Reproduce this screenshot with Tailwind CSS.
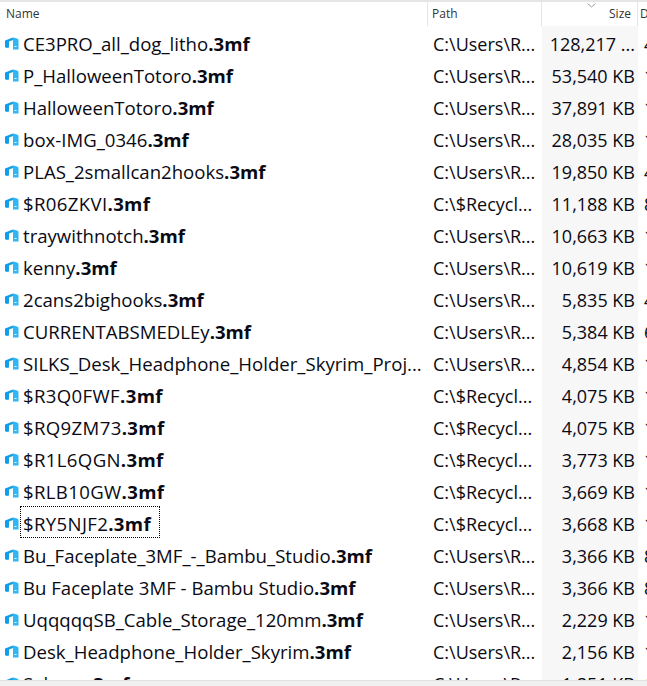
<!DOCTYPE html>
<html>
<head>
    <meta charset="UTF-8">
    <title>Search results</title>
    <script src="https://cdn.jsdelivr.net/npm/@tailwindcss/browser@4"></script>
</head>
<body class="bg-white overflow-hidden h-[686px] relative font-['Open_Sans','Noto_Sans',sans-serif] text-[18px] text-[#0a0a14]">
    <svg class="hidden">
        <symbol id="icon3mf" viewBox="0 0 15 14">
            <path fill="#0f9fe6" d="M0 3.5 L8 0.5 L8 3 L4 4.5 L4 10.5 L1.5 11 L0 10 Z"/>
            <path fill="#2fb6f3" d="M8 0.5 L11.5 1.2 L13.5 2.5 L13.5 12.5 L8 12.5 Z"/>
            <path fill="#ffffff" d="M9.5 9 h2 v1 h-2 z"/>
        </symbol>
    </svg>

    <div class="h-[2px] bg-[#e5e5e5]"></div>
    <!-- column headers -->
    <div class="flex h-[24px] text-[12px] leading-[24px] text-[#333]">
        <div class="w-[428px] shrink-0 pl-[6px] border-r border-[#e5e5e5]">Name</div>
        <div class="w-[114px] shrink-0 pl-[4px] border-r border-[#e5e5e5]">Path</div>
        <div class="w-[96px] shrink-0 pr-[6px] text-right border-r border-[#e5e5e5] relative">
            <svg class="absolute right-[41px] top-[1px]" width="9" height="5" viewBox="0 0 9 5"><path d="M0.5 0.5 L4.5 4 L8.5 0.5" fill="none" stroke="#999" /></svg>
            Size
        </div>
        <div class="pl-[2px]">D</div>
    </div>

    <div class="absolute left-[542px] top-[26px] w-[96px] h-[660px] bg-[#f7f7f7]"></div>

    <div class="relative">
        <div class="flex h-[32px] leading-[32px] whitespace-nowrap mt-[2px]"><div class="w-[428px] shrink-0 flex items-center pl-[5px] overflow-hidden text-[18.6px]"><svg class="w-[15px] h-[14px] mr-[3px] shrink-0"><use href="#icon3mf"/></svg><span>CE3PRO_all_dog_litho<b>.3mf</b></span></div><div class="w-[114px] shrink-0 pl-[5px]">C:\Users\R...</div><div class="w-[96px] shrink-0 pr-[3px] text-right">128,217 ...</div><div class="shrink-0 pl-[6px]">4</div></div>
        <div class="flex h-[32px] leading-[32px] whitespace-nowrap"><div class="w-[428px] shrink-0 flex items-center pl-[5px] overflow-hidden text-[18.6px]"><svg class="w-[15px] h-[14px] mr-[3px] shrink-0"><use href="#icon3mf"/></svg><span>P_HalloweenTotoro<b>.3mf</b></span></div><div class="w-[114px] shrink-0 pl-[5px]">C:\Users\R...</div><div class="w-[96px] shrink-0 pr-[3px] text-right">53,540 KB</div><div class="shrink-0 pl-[6px]">1</div></div>
        <div class="flex h-[32px] leading-[32px] whitespace-nowrap"><div class="w-[428px] shrink-0 flex items-center pl-[5px] overflow-hidden text-[18.6px]"><svg class="w-[15px] h-[14px] mr-[3px] shrink-0"><use href="#icon3mf"/></svg><span>HalloweenTotoro<b>.3mf</b></span></div><div class="w-[114px] shrink-0 pl-[5px]">C:\Users\R...</div><div class="w-[96px] shrink-0 pr-[3px] text-right">37,891 KB</div><div class="shrink-0 pl-[6px]">1</div></div>
        <div class="flex h-[32px] leading-[32px] whitespace-nowrap"><div class="w-[428px] shrink-0 flex items-center pl-[5px] overflow-hidden text-[18.6px]"><svg class="w-[15px] h-[14px] mr-[3px] shrink-0"><use href="#icon3mf"/></svg><span>box-IMG_0346<b>.3mf</b></span></div><div class="w-[114px] shrink-0 pl-[5px]">C:\Users\R...</div><div class="w-[96px] shrink-0 pr-[3px] text-right">28,035 KB</div><div class="shrink-0 pl-[6px]">1</div></div>
        <div class="flex h-[32px] leading-[32px] whitespace-nowrap"><div class="w-[428px] shrink-0 flex items-center pl-[5px] overflow-hidden text-[18.6px]"><svg class="w-[15px] h-[14px] mr-[3px] shrink-0"><use href="#icon3mf"/></svg><span>PLAS_2smallcan2hooks<b>.3mf</b></span></div><div class="w-[114px] shrink-0 pl-[5px]">C:\Users\R...</div><div class="w-[96px] shrink-0 pr-[3px] text-right">19,850 KB</div><div class="shrink-0 pl-[6px]">4</div></div>
        <div class="flex h-[32px] leading-[32px] whitespace-nowrap"><div class="w-[428px] shrink-0 flex items-center pl-[5px] overflow-hidden text-[18.6px]"><svg class="w-[15px] h-[14px] mr-[3px] shrink-0"><use href="#icon3mf"/></svg><span class="tracking-[0.35px]">$R06ZKVI<b>.3mf</b></span></div><div class="w-[114px] shrink-0 pl-[5px]">C:\$Recycl...</div><div class="w-[96px] shrink-0 pr-[3px] text-right">11,188 KB</div><div class="shrink-0 pl-[6px]">8</div></div>
        <div class="flex h-[32px] leading-[32px] whitespace-nowrap"><div class="w-[428px] shrink-0 flex items-center pl-[5px] overflow-hidden text-[18.6px]"><svg class="w-[15px] h-[14px] mr-[3px] shrink-0"><use href="#icon3mf"/></svg><span>traywithnotch<b>.3mf</b></span></div><div class="w-[114px] shrink-0 pl-[5px]">C:\Users\R...</div><div class="w-[96px] shrink-0 pr-[3px] text-right">10,663 KB</div><div class="shrink-0 pl-[6px]">1</div></div>
        <div class="flex h-[32px] leading-[32px] whitespace-nowrap"><div class="w-[428px] shrink-0 flex items-center pl-[5px] overflow-hidden text-[18.6px]"><svg class="w-[15px] h-[14px] mr-[3px] shrink-0"><use href="#icon3mf"/></svg><span>kenny<b>.3mf</b></span></div><div class="w-[114px] shrink-0 pl-[5px]">C:\Users\R...</div><div class="w-[96px] shrink-0 pr-[3px] text-right">10,619 KB</div><div class="shrink-0 pl-[6px]">1</div></div>
        <div class="flex h-[32px] leading-[32px] whitespace-nowrap"><div class="w-[428px] shrink-0 flex items-center pl-[5px] overflow-hidden text-[18.6px]"><svg class="w-[15px] h-[14px] mr-[3px] shrink-0"><use href="#icon3mf"/></svg><span>2cans2bighooks<b>.3mf</b></span></div><div class="w-[114px] shrink-0 pl-[5px]">C:\Users\R...</div><div class="w-[96px] shrink-0 pr-[3px] text-right">5,835 KB</div><div class="shrink-0 pl-[6px]">4</div></div>
        <div class="flex h-[32px] leading-[32px] whitespace-nowrap"><div class="w-[428px] shrink-0 flex items-center pl-[5px] overflow-hidden text-[18.6px]"><svg class="w-[15px] h-[14px] mr-[3px] shrink-0"><use href="#icon3mf"/></svg><span>CURRENTABSMEDLEy<b>.3mf</b></span></div><div class="w-[114px] shrink-0 pl-[5px]">C:\Users\R...</div><div class="w-[96px] shrink-0 pr-[3px] text-right">5,384 KB</div><div class="shrink-0 pl-[6px]">6</div></div>
        <div class="flex h-[32px] leading-[32px] whitespace-nowrap"><div class="w-[428px] shrink-0 flex items-center pl-[5px] overflow-hidden text-[18.6px]"><svg class="w-[15px] h-[14px] mr-[3px] shrink-0"><use href="#icon3mf"/></svg><span>SILKS_Desk_Headphone_Holder_Skyrim_Proj...</span></div><div class="w-[114px] shrink-0 pl-[5px]">C:\Users\R...</div><div class="w-[96px] shrink-0 pr-[3px] text-right">4,854 KB</div><div class="shrink-0 pl-[6px]">1</div></div>
        <div class="flex h-[32px] leading-[32px] whitespace-nowrap"><div class="w-[428px] shrink-0 flex items-center pl-[5px] overflow-hidden text-[18.6px]"><svg class="w-[15px] h-[14px] mr-[3px] shrink-0"><use href="#icon3mf"/></svg><span class="tracking-[0.35px]">$R3Q0FWF<b>.3mf</b></span></div><div class="w-[114px] shrink-0 pl-[5px]">C:\$Recycl...</div><div class="w-[96px] shrink-0 pr-[3px] text-right">4,075 KB</div><div class="shrink-0 pl-[6px]">1</div></div>
        <div class="flex h-[32px] leading-[32px] whitespace-nowrap"><div class="w-[428px] shrink-0 flex items-center pl-[5px] overflow-hidden text-[18.6px]"><svg class="w-[15px] h-[14px] mr-[3px] shrink-0"><use href="#icon3mf"/></svg><span class="tracking-[0.35px]">$RQ9ZM73<b>.3mf</b></span></div><div class="w-[114px] shrink-0 pl-[5px]">C:\$Recycl...</div><div class="w-[96px] shrink-0 pr-[3px] text-right">4,075 KB</div><div class="shrink-0 pl-[6px]">1</div></div>
        <div class="flex h-[32px] leading-[32px] whitespace-nowrap"><div class="w-[428px] shrink-0 flex items-center pl-[5px] overflow-hidden text-[18.6px]"><svg class="w-[15px] h-[14px] mr-[3px] shrink-0"><use href="#icon3mf"/></svg><span class="tracking-[0.35px]">$R1L6QGN<b>.3mf</b></span></div><div class="w-[114px] shrink-0 pl-[5px]">C:\$Recycl...</div><div class="w-[96px] shrink-0 pr-[3px] text-right">3,773 KB</div><div class="shrink-0 pl-[6px]">1</div></div>
        <div class="flex h-[32px] leading-[32px] whitespace-nowrap"><div class="w-[428px] shrink-0 flex items-center pl-[5px] overflow-hidden text-[18.6px]"><svg class="w-[15px] h-[14px] mr-[3px] shrink-0"><use href="#icon3mf"/></svg><span class="tracking-[0.35px]">$RLB10GW<b>.3mf</b></span></div><div class="w-[114px] shrink-0 pl-[5px]">C:\$Recycl...</div><div class="w-[96px] shrink-0 pr-[3px] text-right">3,669 KB</div><div class="shrink-0 pl-[6px]">1</div></div>
        <div class="flex h-[32px] leading-[32px] whitespace-nowrap"><div class="w-[428px] shrink-0 flex items-center pl-[5px] text-[18.6px]"><svg class="w-[15px] h-[14px] mr-[3px] shrink-0"><use href="#icon3mf"/></svg><span class="tracking-[0.35px] border border-dotted border-black h-[32px] mb-[4px] pt-[1px] leading-[31px] pr-[8px] pl-[2px] -ml-[3px]">$RY5NJF2<b>.3mf</b></span></div><div class="w-[114px] shrink-0 pl-[5px]">C:\$Recycl...</div><div class="w-[96px] shrink-0 pr-[3px] text-right">3,668 KB</div><div class="shrink-0 pl-[6px]">1</div></div>
        <div class="flex h-[32px] leading-[32px] whitespace-nowrap"><div class="w-[428px] shrink-0 flex items-center pl-[5px] overflow-hidden text-[18.6px]"><svg class="w-[15px] h-[14px] mr-[3px] shrink-0"><use href="#icon3mf"/></svg><span>Bu_Faceplate_3MF_-_Bambu_Studio<b>.3mf</b></span></div><div class="w-[114px] shrink-0 pl-[5px]">C:\Users\R...</div><div class="w-[96px] shrink-0 pr-[3px] text-right">3,366 KB</div><div class="shrink-0 pl-[6px]">8</div></div>
        <div class="flex h-[32px] leading-[32px] whitespace-nowrap"><div class="w-[428px] shrink-0 flex items-center pl-[5px] overflow-hidden text-[18.6px]"><svg class="w-[15px] h-[14px] mr-[3px] shrink-0"><use href="#icon3mf"/></svg><span>Bu Faceplate 3MF - Bambu Studio<b>.3mf</b></span></div><div class="w-[114px] shrink-0 pl-[5px]">C:\Users\R...</div><div class="w-[96px] shrink-0 pr-[3px] text-right">3,366 KB</div><div class="shrink-0 pl-[6px]">8</div></div>
        <div class="flex h-[32px] leading-[32px] whitespace-nowrap"><div class="w-[428px] shrink-0 flex items-center pl-[5px] overflow-hidden text-[18.6px]"><svg class="w-[15px] h-[14px] mr-[3px] shrink-0"><use href="#icon3mf"/></svg><span>UqqqqqSB_Cable_Storage_120mm<b>.3mf</b></span></div><div class="w-[114px] shrink-0 pl-[5px]">C:\Users\R...</div><div class="w-[96px] shrink-0 pr-[3px] text-right">2,229 KB</div><div class="shrink-0 pl-[6px]">1</div></div>
        <div class="flex h-[32px] leading-[32px] whitespace-nowrap"><div class="w-[428px] shrink-0 flex items-center pl-[5px] overflow-hidden text-[18.6px]"><svg class="w-[15px] h-[14px] mr-[3px] shrink-0"><use href="#icon3mf"/></svg><span>Desk_Headphone_Holder_Skyrim<b>.3mf</b></span></div><div class="w-[114px] shrink-0 pl-[5px]">C:\Users\R...</div><div class="w-[96px] shrink-0 pr-[3px] text-right">2,156 KB</div><div class="shrink-0 pl-[6px]">1</div></div>
        <div class="flex h-[32px] leading-[32px] whitespace-nowrap"><div class="w-[428px] shrink-0 flex items-center pl-[5px] overflow-hidden text-[18.6px]"><svg class="w-[15px] h-[14px] mr-[3px] shrink-0"><use href="#icon3mf"/></svg><span>Salmon<b>.3mf</b></span></div><div class="w-[114px] shrink-0 pl-[5px]">C:\Users\R...</div><div class="w-[96px] shrink-0 pr-[3px] text-right">1,851 KB</div><div class="shrink-0 pl-[6px]">1</div></div>
    </div>

    <div class="absolute left-0 right-0 bottom-0 h-[6px] bg-[#f0f0f0] border-t border-[#e0e0e0]"></div>
</body>
</html>
